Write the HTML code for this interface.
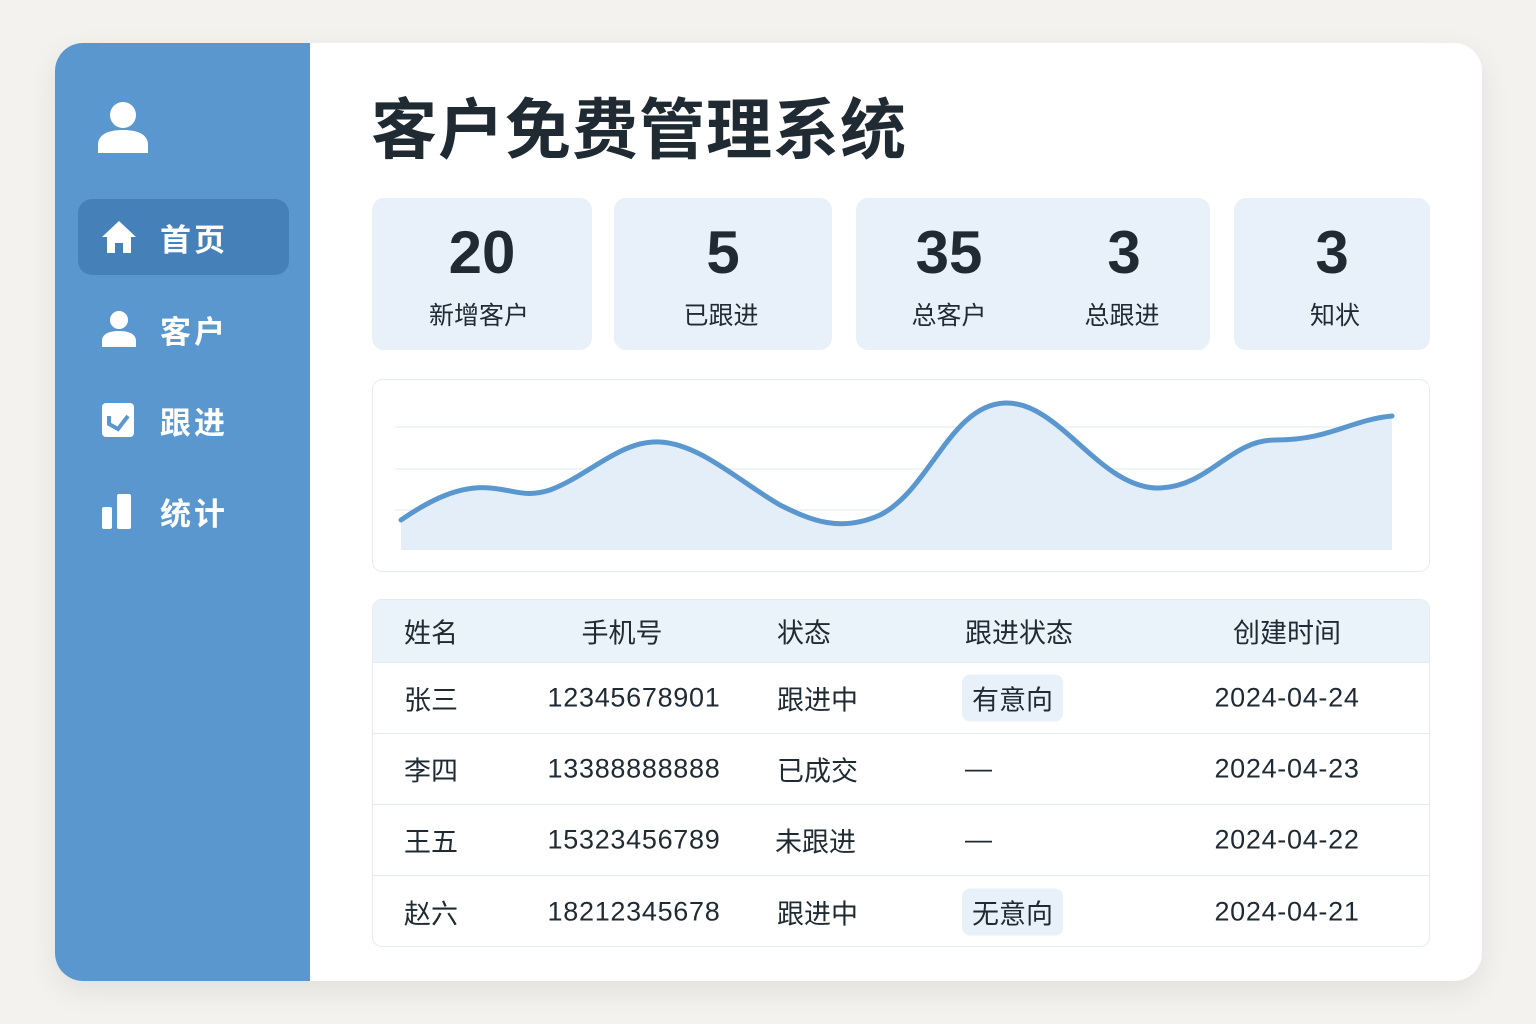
<!DOCTYPE html>
<html><head><meta charset="utf-8"><style>
*{margin:0;padding:0;box-sizing:border-box}
body{width:1536px;height:1024px;background:#f3f2ef;font-family:"Liberation Sans","Noto Sans CJK SC",sans-serif;position:relative;overflow:hidden;color:#1f2a33}
.card{position:absolute;left:55px;top:43px;width:1427px;height:938px;background:#fff;border-radius:28px;overflow:hidden;box-shadow:0 10px 30px rgba(0,0,0,.08)}
.side{position:absolute;left:0;top:0;width:255px;height:100%;background:#5b97cf}
.nav{position:absolute;left:23px;width:211px;height:76px;border-radius:14px;color:#fff;font-size:31px;font-weight:bold;display:flex;align-items:center}
.nav svg{position:absolute;left:23px}
.nav span{position:absolute;left:82px;letter-spacing:3px}
.abs{position:absolute}
h1{position:absolute;left:316px;top:34px;font-size:66px;font-weight:bold;letter-spacing:1px;color:#1f2a33}
.stat{position:absolute;top:155px;height:152px;background:#e8f1f9;border-radius:12px}
.num{position:absolute;font-size:60px;font-weight:bold;top:20px;transform:translateX(-50%)}
.lbl{position:absolute;font-size:25px;top:98px;transform:translateX(-50%);white-space:nowrap}
.tbl{position:absolute;left:317px;top:556px;width:1058px;height:348px;border:1px solid #e6ebf0;border-radius:10px;overflow:hidden;font-size:27px}
.row{position:absolute;left:0;width:100%;height:71px;border-bottom:1px solid #e6ebf0}
.row div{position:absolute;top:50%;transform:translateY(-50%);white-space:nowrap}
.n{letter-spacing:0.7px}
.c{transform:translate(-50%,-50%)!important}
.tag{background:#e8f1f9;padding:4px 10px;border-radius:8px}
</style></head><body>
<div class="card">
<div class="side">
<svg class="abs" style="left:42px;top:58px" width="52" height="53" viewBox="0 0 52 53"><circle cx="26" cy="14" r="13" fill="#fff"/><path d="M1 52 V44 C1 34 10 29 26 29 C42 29 51 34 51 44 V52 Z" fill="#fff"/></svg>
<div class="nav" style="top:156px;background:#4680b9"><svg width="36" height="36" viewBox="0 0 36 36"><path d="M18 2 L35 18 H30 V34 H22 V24 H14 V34 H6 V18 H1 Z" fill="#fff"/></svg><span>首页</span></div>
<div class="nav" style="top:248px"><svg width="36" height="38" viewBox="0 0 36 38"><circle cx="18" cy="10" r="9" fill="#fff"/><path d="M1 37 V31 C1 24 8 21 18 21 C28 21 35 24 35 31 V37 Z" fill="#fff"/></svg><span>客户</span></div>
<div class="nav" style="top:339px"><svg width="34" height="36" viewBox="0 0 34 36"><rect x="1" y="1" width="32" height="34" rx="4" fill="#fff"/><path d="M8 14 V22 L17 27 L27 14" stroke="#5b97cf" stroke-width="4" fill="none"/></svg><span>跟进</span></div>
<div class="nav" style="top:430px"><svg width="32" height="36" viewBox="0 0 32 36"><rect x="1" y="14" width="10" height="22" rx="2" fill="#fff"/><rect x="16" y="1" width="14" height="35" rx="2" fill="#fff"/></svg><span>统计</span></div>
</div>
<h1>客户免费管理系统</h1>
<div class="stat" style="left:317px;width:220px"><div class="num" style="left:110px">20</div><div class="lbl" style="left:107px">新增客户</div></div>
<div class="stat" style="left:559px;width:218px"><div class="num" style="left:109px">5</div><div class="lbl" style="left:107px">已跟进</div></div>
<div class="stat" style="left:801px;width:354px"><div class="num" style="left:93px">35</div><div class="lbl" style="left:93px">总客户</div><div class="num" style="left:268px">3</div><div class="lbl" style="left:266px">总跟进</div></div>
<div class="stat" style="left:1179px;width:196px"><div class="num" style="left:98px">3</div><div class="lbl" style="left:101px">知状</div></div>
<svg class="abs" style="left:317px;top:336px" width="1058" height="193" viewBox="372 379 1058 193">
<rect x="372.5" y="379.5" width="1057" height="192" rx="10" fill="#fff" stroke="#e6ebf0"/>
<line x1="395" y1="427" x2="1392" y2="427" stroke="#e3e8ee"/><line x1="395" y1="469" x2="1392" y2="469" stroke="#e3e8ee"/><line x1="395" y1="510" x2="1392" y2="510" stroke="#e3e8ee"/>
<path d="M401 520 C430 500 460 485 490 488 C515 490 525 498 550 490 C590 475 620 440 660 442 C700 444 740 482 780 505 C810 520 840 533 880 515 C930 490 950 405 1005 403 C1060 401 1100 490 1160 488 C1210 486 1230 440 1275 440 C1330 440 1350 420 1392 416 V550 H401 Z" fill="#e4eef8"/>
<path d="M401 520 C430 500 460 485 490 488 C515 490 525 498 550 490 C590 475 620 440 660 442 C700 444 740 482 780 505 C810 520 840 533 880 515 C930 490 950 405 1005 403 C1060 401 1100 490 1160 488 C1210 486 1230 440 1275 440 C1330 440 1350 420 1392 416" fill="none" stroke="#5b97cf" stroke-width="5" stroke-linecap="round"/>
</svg>
<div class="tbl">
<div class="row" style="top:0;height:63px;background:#eaf2fa"><div style="left:31px">姓名</div><div class="c" style="left:249px">手机号</div><div style="left:404px">状态</div><div style="left:592px">跟进状态</div><div class="c" style="left:914px">创建时间</div></div>
<div class="row" style="top:63px"><div style="left:31px">张三</div><div class="c n" style="left:261px">12345678901</div><div style="left:404px">跟进中</div><div style="left:589px" class="tag">有意向</div><div class="c n" style="left:914px">2024-04-24</div></div>
<div class="row" style="top:134px"><div style="left:31px">李四</div><div class="c n" style="left:261px">13388888888</div><div style="left:404px">已成交</div><div style="left:592px">—</div><div class="c n" style="left:914px">2024-04-23</div></div>
<div class="row" style="top:205px"><div style="left:31px">王五</div><div class="c n" style="left:261px">15323456789</div><div style="left:402px">未跟进</div><div style="left:592px">—</div><div class="c n" style="left:914px">2024-04-22</div></div>
<div class="row" style="top:276px;border:none"><div style="left:31px">赵六</div><div class="c n" style="left:261px">18212345678</div><div style="left:404px">跟进中</div><div style="left:589px" class="tag">无意向</div><div class="c n" style="left:914px">2024-04-21</div></div>
</div>
</div>
</body></html>
